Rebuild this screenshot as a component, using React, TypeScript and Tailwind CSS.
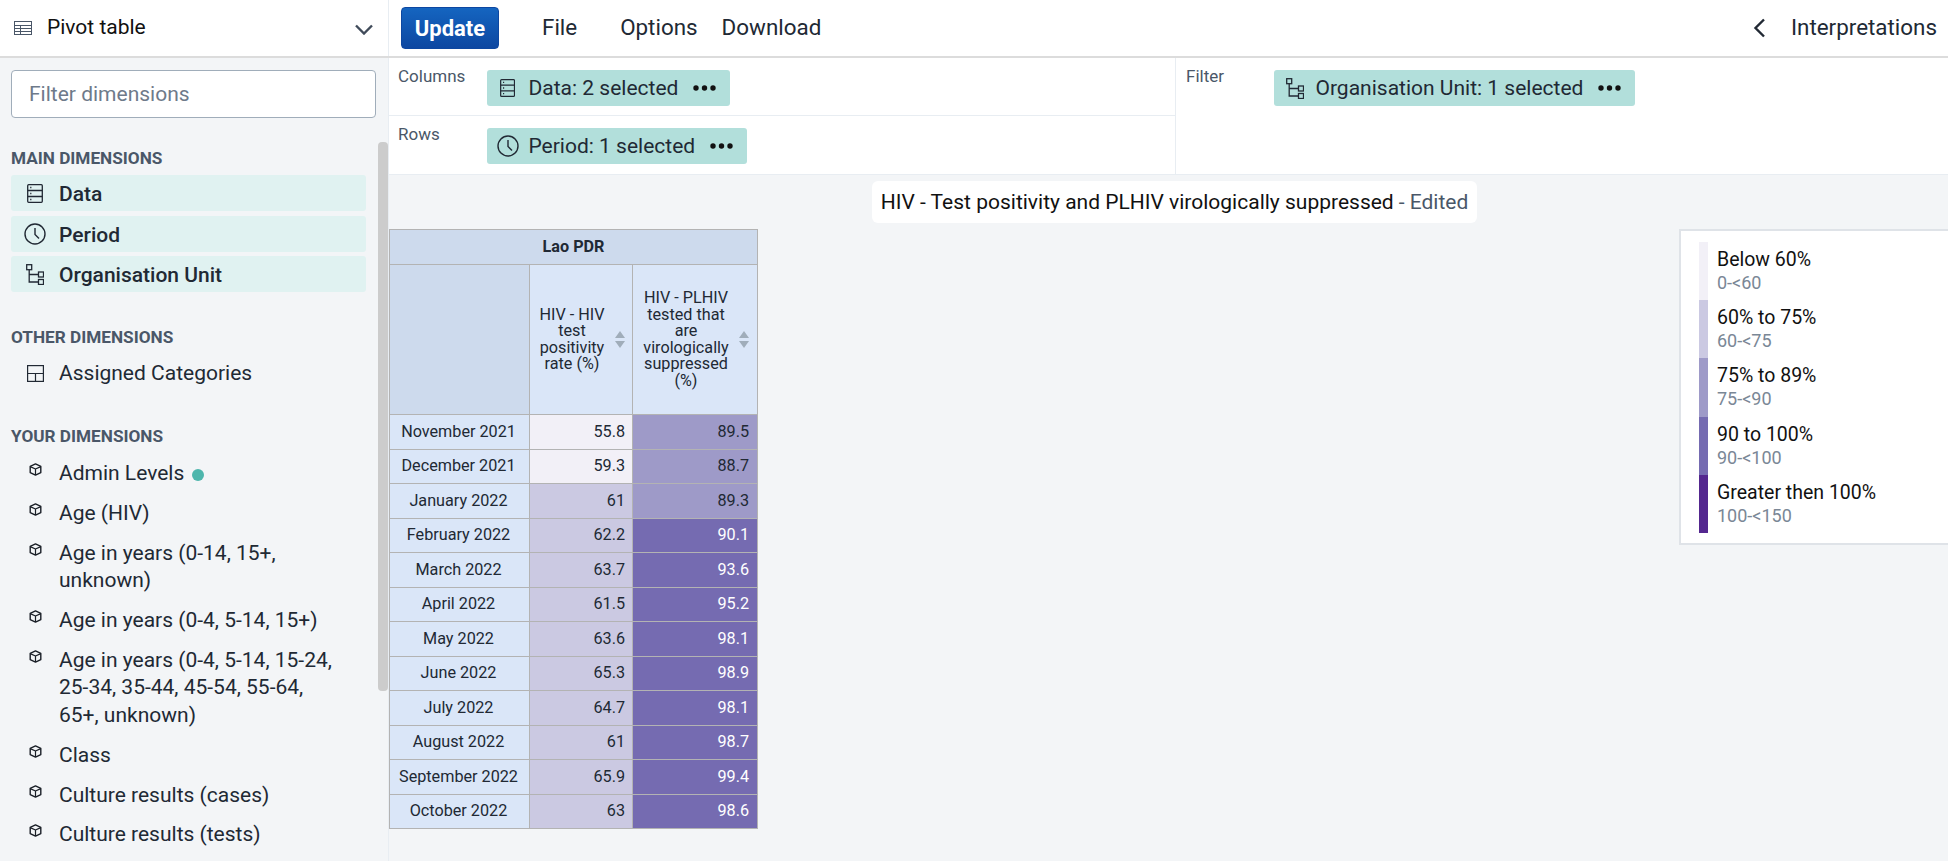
const rows = [
  ["November 2021", "55.8", "89.5", "bg-[#f2f0f7]", "bg-[#9e9ac8]"],
  ["December 2021", "59.3", "88.7", "bg-[#f2f0f7]", "bg-[#9e9ac8]"],
  ["January 2022", "61", "89.3", "bg-[#cbc9e2]", "bg-[#9e9ac8]"],
  ["February 2022", "62.2", "90.1", "bg-[#cbc9e2]", "bg-[#756bb1] text-white"],
  ["March 2022", "63.7", "93.6", "bg-[#cbc9e2]", "bg-[#756bb1] text-white"],
  ["April 2022", "61.5", "95.2", "bg-[#cbc9e2]", "bg-[#756bb1] text-white"],
  ["May 2022", "63.6", "98.1", "bg-[#cbc9e2]", "bg-[#756bb1] text-white"],
  ["June 2022", "65.3", "98.9", "bg-[#cbc9e2]", "bg-[#756bb1] text-white"],
  ["July 2022", "64.7", "98.1", "bg-[#cbc9e2]", "bg-[#756bb1] text-white"],
  ["August 2022", "61", "98.7", "bg-[#cbc9e2]", "bg-[#756bb1] text-white"],
  ["September 2022", "65.9", "99.4", "bg-[#cbc9e2]", "bg-[#756bb1] text-white"],
  ["October 2022", "63", "98.6", "bg-[#cbc9e2]", "bg-[#756bb1] text-white"],
];

const legend = [
  ["Below 60%", "0-<60", "bg-[#f2f0f7]"],
  ["60% to 75%", "60-<75", "bg-[#cbc9e2]"],
  ["75% to 89%", "75-<90", "bg-[#9e9ac8]"],
  ["90 to 100%", "90-<100", "bg-[#756bb1]"],
  ["Greater then 100%", "100-<150", "bg-[#54278f]"],
];

const yourDimensions = [
  "Age (HIV)",
  "Age in years (0-14, 15+, unknown)",
  "Age in years (0-4, 5-14, 15+)",
  "Age in years (0-4, 5-14, 15-24, 25-34, 35-44, 45-54, 55-64, 65+, unknown)",
  "Class",
  "Culture results (cases)",
  "Culture results (tests)",
];

function TableIcon() {
  return (
    <svg width="18" height="14" viewBox="0 0 18 14" fill="none" stroke="#4a5768" strokeWidth="1">
      <rect x="0.5" y="0.5" width="17" height="13" />
      <path d="M0.5 4.5H17.5M0.5 7.5H17.5M0.5 10.5H17.5M6.5 4.5V13.5" />
    </svg>
  );
}

function DataIcon({ size = 19 }: { size?: number }) {
  return (
    <svg width={(size * 16) / 19} height={size} viewBox="0 0 16 19" fill="none" stroke="#212934" strokeWidth="1.3">
      <rect x="0.7" y="0.7" width="14.6" height="17.6" rx="1" />
      <path d="M0.7 6.5H15.3M0.7 12.5H15.3" />
      <path d="M3.2 3.6H4.4M3.2 9.5H4.4M3.2 15.4H4.4" strokeWidth="1.5" />
    </svg>
  );
}

function ClockIcon() {
  return (
    <svg width="22" height="22" viewBox="0 0 22 22" fill="none" stroke="#212934" strokeWidth="1.4">
      <circle cx="11" cy="11" r="10" />
      <path d="M11 5V11.5L15 15.5" />
    </svg>
  );
}

function OrgIcon() {
  return (
    <svg width="18" height="21" viewBox="0 0 18 21" fill="none" stroke="#212934" strokeWidth="1.3">
      <rect x="0.7" y="0.7" width="5" height="5" />
      <rect x="12.5" y="8" width="5" height="5" />
      <rect x="12.5" y="15.5" width="5" height="5" />
      <path d="M3.2 5.7V18H12.5M3.2 10.5H12.5" />
    </svg>
  );
}

function CategoryIcon() {
  return (
    <svg width="17" height="17" viewBox="0 0 17 17" fill="none" stroke="#212934" strokeWidth="1.2">
      <rect x="0.6" y="0.6" width="15.8" height="15.8" />
      <path d="M0.6 8.5H16.4M8.5 8.5V16.4" />
    </svg>
  );
}

function CubeIcon() {
  return (
    <svg width="13" height="13" viewBox="0 0 13 13" fill="none" stroke="#1a1f27" strokeWidth="1.4" strokeLinejoin="round">
      <path d="M6.5 0.9L11.8 3.4V9.6L6.5 12.1L1.2 9.6V3.4Z" />
      <path d="M1.2 3.6L6.5 6L11.8 3.6M6.5 6V12.1" strokeWidth="1.2" />
    </svg>
  );
}

function Dots() {
  return (
    <svg width="23" height="6" viewBox="0 0 23 6" fill="#111">
      <circle cx="3" cy="3" r="2.7" />
      <circle cx="11.5" cy="3" r="2.7" />
      <circle cx="20" cy="3" r="2.7" />
    </svg>
  );
}

function SortIcon({ className }: { className: string }) {
  return (
    <svg className={className} width="10" height="17" viewBox="0 0 10 17" fill="#a0adba">
      <path d="M5 0L10 7H0Z" />
      <path d="M0 10H10L5 17Z" />
    </svg>
  );
}

function MainItem({ icon, label }: { icon: React.ReactNode; label: string }) {
  return (
    <div className="mb-[4.5px] flex h-9 w-[355px] items-center rounded-[3px] bg-[#e0f2f1] text-[21px] font-medium text-[#212934]">
      <div className="flex w-12 justify-center">{icon}</div>
      <span className="pt-[4px]">{label}</span>
    </div>
  );
}

function DimItem({ label, dot }: { label: string; dot?: boolean }) {
  return (
    <div className="flex w-[355px] items-start py-[6.3px] text-[21px] leading-[27.3px] text-[#212934]">
      <div className="flex w-12 shrink-0 justify-center pt-[3px]">
        <CubeIcon />
      </div>
      <div className="w-[285px]">
        {label}
        {dot && <span className="ml-2 inline-block h-3 w-3 rounded-full bg-[#4db6ac] align-[-1px]" />}
      </div>
    </div>
  );
}

function Chip({ icon, label }: { icon: React.ReactNode; label: string }) {
  return (
    <div className="flex h-9 items-center rounded-[3px] bg-[#b2dfdb] text-[21px] text-[#212934]">
      <div className="flex w-[41.5px] justify-center">{icon}</div>
      <span className="pt-[1px]">{label}</span>
      <div className="ml-[14.5px] flex items-center pr-[14px]">
        <Dots />
      </div>
    </div>
  );
}

export default function App() {
  return (
    <div className="flex h-[861px] w-[1948px] flex-col overflow-hidden bg-[#f3f5f7] font-['Roboto',sans-serif]">
      {/* Top toolbar */}
      <header className="flex h-[58px] shrink-0 border-b-2 border-[#dcdcdc] bg-white">
        <div className="flex w-[389px] shrink-0 items-center border-r border-[#e8edf2] pl-[14px] pr-[15px]">
          <TableIcon />
          <span className="ml-[15px] text-[21px] text-[#111]">Pivot table</span>
          <svg className="ml-auto mt-[2px]" width="18" height="11" viewBox="0 0 18 11" fill="none" stroke="#404b5a" strokeWidth="2.4">
            <path d="M1 1.5L9 9.5L17 1.5" />
          </svg>
        </div>
        <div className="flex flex-1 items-center text-[22.4px] text-[#212934]">
          <button className="ml-3 h-[42px] w-[98px] rounded-[4px] border border-[#0d47a1] bg-gradient-to-b from-[#1565c0] to-[#0d47a1] text-[22px] font-bold text-white">
            Update
          </button>
          <span className="ml-[43px]">File</span>
          <span className="ml-[43px]">Options</span>
          <span className="ml-[24px]">Download</span>
          <svg className="ml-auto" width="13" height="20" viewBox="0 0 13 20" fill="none" stroke="#212934" strokeWidth="2.4">
            <path d="M11 1.5L2.5 10L11 18.5" />
          </svg>
          <span className="ml-[25px] mr-[11px]">Interpretations</span>
        </div>
      </header>

      <div className="flex min-h-0 flex-1">
        {/* Dimensions sidebar */}
        <aside className="flex w-[389px] shrink-0 border-r border-[#e8edf2]">
          <div className="w-[378px] pl-[11px]">
            <div className="mt-3 flex h-12 w-[365px] items-center rounded-[4px] border border-[#a0adba] bg-white pt-[2px] pl-[17px] text-[21px] text-[#6e7a8a]">
              Filter dimensions
            </div>
            <h3 className="mt-[30px] mb-[7px] text-[17.2px] leading-5 font-bold text-[#4a5768]">MAIN DIMENSIONS</h3>
            <MainItem icon={<DataIcon />} label="Data" />
            <MainItem icon={<ClockIcon />} label="Period" />
            <MainItem icon={<OrgIcon />} label="Organisation Unit" />
            <h3 className="mt-[35px] text-[17.2px] leading-5 font-bold text-[#4a5768]">OTHER DIMENSIONS</h3>
            <div className="mt-[6px] flex h-10 items-center text-[21px] text-[#212934]">
              <div className="flex w-12 justify-center">
                <CategoryIcon />
              </div>
              <span className="pt-[2px]">Assigned Categories</span>
            </div>
            <h3 className="mt-[33px] mb-[8px] text-[17.2px] leading-5 font-bold text-[#4a5768]">YOUR DIMENSIONS</h3>
            <DimItem label="Admin Levels" dot />
            {yourDimensions.map((d) => (
              <DimItem key={d} label={d} />
            ))}
          </div>
          <div className="w-[10px]">
            <div className="mt-[84px] h-[549px] rounded-[4px] bg-[#cccccc]" />
          </div>
        </aside>

        <main className="flex min-w-0 flex-1 flex-col">
          {/* Layout panel */}
          <section className="flex h-[117px] shrink-0 border-b border-[#e8edf2] bg-white">
            <div className="w-[787px] shrink-0 border-r border-[#e8edf2]">
              <div className="flex h-[58px] border-b border-[#e8edf2] pl-[9px]">
                <span className="mt-2 w-[89px] text-[17px] leading-5 text-[#4a5768]">Columns</span>
                <div className="mt-3">
                  <Chip icon={<DataIcon size={18} />} label="Data: 2 selected" />
                </div>
              </div>
              <div className="flex h-[58px] pl-[9px]">
                <span className="mt-2 w-[89px] text-[17px] leading-5 text-[#4a5768]">Rows</span>
                <div className="mt-3">
                  <Chip icon={<ClockIcon />} label="Period: 1 selected" />
                </div>
              </div>
            </div>
            <div className="flex flex-1 pl-[10px]">
              <span className="mt-2 w-[88px] text-[17px] leading-5 text-[#4a5768]">Filter</span>
              <div className="mt-3">
                <Chip icon={<OrgIcon />} label="Organisation Unit: 1 selected" />
              </div>
            </div>
          </section>

          {/* Title */}
          <div className="mt-[6px] flex justify-center pl-[12px]">
            <div className="flex h-[42px] items-center rounded-[6px] bg-white px-[9px] pt-[2px] text-[21px] text-[#111]">
              HIV - Test positivity and PLHIV virologically suppressed
              <span className="ml-[5px] text-[#4a5768]">- Edited</span>
            </div>
          </div>

          <div className="mt-[6px] flex items-start justify-between">
            {/* Pivot table */}
            <table className="w-[368px] table-fixed border-collapse border border-[#b3b3b3] text-[16.2px] leading-[16.5px] text-[#212934]">
              <colgroup>
                <col className="w-[140px]" />
                <col className="w-[103px]" />
                <col className="w-[125px]" />
              </colgroup>
              <thead>
                <tr className="h-[35px]">
                  <th colSpan={3} className="border border-[#b3b3b3] bg-[#cddaed] text-center font-bold">
                    Lao PDR
                  </th>
                </tr>
                <tr className="h-[150px]">
                  <th className="border border-[#b3b3b3] bg-[#cddaed]" />
                  <th className="border border-[#b3b3b3] bg-[#dae6f8] p-0 font-normal">
                    <div className="flex items-center">
                      <div className="ml-[2px] w-[80px] text-center">HIV - HIV test positivity rate (%)</div>
                      <SortIcon className="ml-[3px]" />
                    </div>
                  </th>
                  <th className="border border-[#b3b3b3] bg-[#dae6f8] p-0 font-normal">
                    <div className="flex items-center">
                      <div className="ml-[8px] w-[90px] text-center">HIV - PLHIV tested that are virologically suppressed (%)</div>
                      <SortIcon className="ml-[8px]" />
                    </div>
                  </th>
                </tr>
              </thead>
              <tbody>
                {rows.map(([period, a, b, ca, cb]) => (
                  <tr key={period} className="h-[34.5px]">
                    <td className="border border-[#b3b3b3] bg-[#dae6f8] p-0 pr-[2px] text-center">{period}</td>
                    <td className={`border border-[#b3b3b3] p-0 pr-[7px] text-right ${ca}`}>{a}</td>
                    <td className={`border border-[#b3b3b3] p-0 pr-2 text-right ${cb}`}>{b}</td>
                  </tr>
                ))}
              </tbody>
            </table>

            {/* Legend */}
            <div className="h-[316px] w-[269px] border-2 border-r-0 border-[#dfe3e8] bg-white pt-[11px] pl-[18px]">
              {legend.map(([name, range, color]) => (
                <div key={name} className="flex h-[58.2px]">
                  <div className={`w-[9px] ${color}`} />
                  <div className="ml-[9px] pt-[5px]">
                    <div className="text-[19.5px] leading-[26px] text-[#111]">{name}</div>
                    <div className="text-[18px] leading-[20px] text-[#7a8796]">{range}</div>
                  </div>
                </div>
              ))}
            </div>
          </div>
        </main>
      </div>
    </div>
  );
}
